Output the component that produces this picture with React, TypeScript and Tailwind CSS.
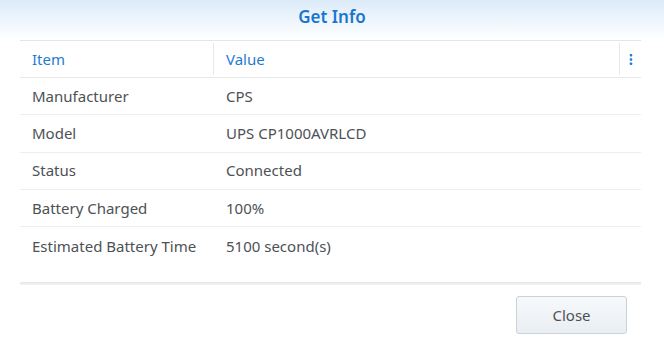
import React from "react";

const rows: [string, string][] = [
  ["Manufacturer", "CPS"],
  ["Model", "UPS CP1000AVRLCD"],
  ["Status", "Connected"],
  ["Battery Charged", "100%"],
  ["Estimated Battery Time", "5100 second(s)"],
];

export default function App() {
  return (
    <div
      className="w-[664px] h-[341px] bg-white flex flex-col overflow-hidden"
      style={{ fontFamily: '"Noto Sans", Roboto, sans-serif' }}
    >
      <div className="h-[40px] shrink-0 flex items-start justify-center pt-[4px] bg-gradient-to-b from-[#dcebf9] to-[#ffffff]">
        <span className="text-[17px] font-semibold text-[#1a75cf] leading-[26px]">Get Info</span>
      </div>
      <div className="mx-[20px] w-[621px] border-t border-[#e3e5e8] flex flex-col">
        <div className="h-[37px] flex items-center border-b border-[#e6e8ea] text-[15px] text-[#1f7bd2]">
          <div className="w-[193px] pl-[12px] self-stretch flex items-center">Item</div>
          <div className="flex-1 self-stretch flex items-center my-[2px] pl-[12px] border-l border-[#e6e8ea]">Value</div>
          <div className="w-[22px] self-stretch flex items-center justify-center my-[2px] border-l border-[#e6e8ea]">
            <svg width="4" height="11" viewBox="0 0 4 11">
              <rect x="0.75" y="0" width="2.5" height="2.6" rx="0.8" fill="#1f7bd2" />
              <rect x="0.75" y="4.2" width="2.5" height="2.6" rx="0.8" fill="#1f7bd2" />
              <rect x="0.75" y="8.4" width="2.5" height="2.6" rx="0.8" fill="#1f7bd2" />
            </svg>
          </div>
        </div>
        {rows.map(([k, v], i) => (
          <div
            key={k}
            className={`h-[37.3px] flex items-center text-[15px] text-[#4d5156] ${i < rows.length - 1 ? "border-b border-[#eceef0]" : ""}`}
          >
            <div className="w-[194px] pl-[12px]">{k}</div>
            <div className="flex-1 pl-[12px]">{v}</div>
          </div>
        ))}
      </div>
      <div className="mx-[20px] w-[621px] mt-[18px] h-[3px] bg-gradient-to-b from-[#e4e6e8] to-[#f3f4f5]" />
      <div className="flex justify-end pr-[37px] pt-[11px]">
        <button className="w-[111px] h-[38px] rounded-[3px] border border-[#c9d1d9] bg-gradient-to-b from-[#f7f9fb] to-[#e9eef3] text-[15px] text-[#4d5156]">
          Close
        </button>
      </div>
    </div>
  );
}
